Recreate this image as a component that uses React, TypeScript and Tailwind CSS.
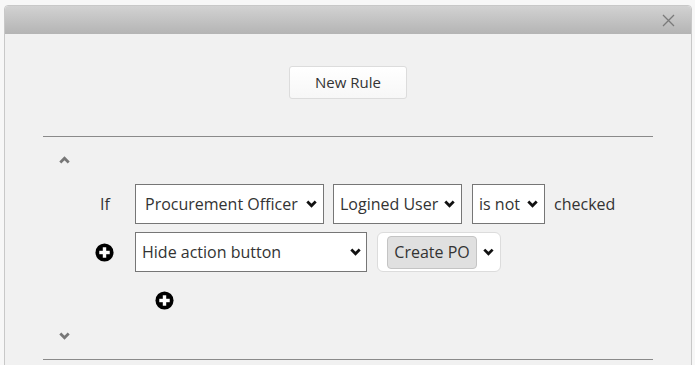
import React from "react";

const Chev = ({ className = "" }: { className?: string }) => (
  <svg width="11" height="8" viewBox="0 0 11 8" className={className}>
    <path d="M1.3 1.6 L5.5 5.8 L9.7 1.6" fill="none" stroke="currentColor" strokeWidth="2.8" />
  </svg>
);

const PlusCircle = () => (
  <svg width="19" height="19" viewBox="0 0 20 20">
    <circle cx="10" cy="10" r="9.5" fill="#000" />
    <rect x="8.2" y="4.5" width="3.6" height="11" fill="#fff" />
    <rect x="4.5" y="8.2" width="11" height="3.6" fill="#fff" />
  </svg>
);

const Select = ({ text, w, pl }: { text: string; w: string; pl: string }) => (
  <div
    className={`flex h-[40px] items-center justify-between border border-[#767676] bg-white pr-[6px] text-[16px] text-[#333] ${w} ${pl}`}
  >
    <span className="whitespace-nowrap">{text}</span>
    <Chev className="text-[#111]" />
  </div>
);

export default function App() {
  return (
    <div className="h-[365px] w-[695px] overflow-hidden bg-[#f7f7f7] pt-[5px] pl-[4px] pr-[3px]" style={{ fontFamily: '"Open Sans", sans-serif' }}>
      <div className="h-[400px] rounded-t-[4px] border border-[#c8c8c8] bg-[#f1f1f1]">
        <div className="flex h-[28px] items-center justify-end rounded-t-[4px] bg-gradient-to-b from-[#d2d2d2] to-[#b4b4b4] pr-[16px]">
          <svg width="13" height="13" viewBox="0 0 13 13">
            <path d="M1 1 L12 12 M12 1 L1 12" stroke="#7a7a7a" strokeWidth="1.3" />
          </svg>
        </div>
        <div className="flex justify-center pt-[32px]">
          <button className="h-[33px] w-[118px] rounded-[3px] border border-[#dcdcdc] bg-gradient-to-b from-white to-[#f7f7f7] text-[15px] text-[#333]">
            New Rule
          </button>
        </div>
        <div className="mx-[38px] mt-[37px] border-t border-[#8a8a8a]">
          <div className="pl-[16px] pt-[19px] text-[#777]">
            <Chev className="rotate-180" />
          </div>
          <div className="mt-[20px] flex items-center">
            <span className="w-[92px] pl-[57px] text-[16px] text-[#333]">If</span>
            <Select text="Procurement Officer" w="w-[189px]" pl="pl-[9px]" />
            <div className="w-[9px]" />
            <Select text="Logined User" w="w-[129px]" pl="pl-[6px]" />
            <div className="w-[10px]" />
            <Select text="is not" w="w-[73px]" pl="pl-[6px]" />
            <span className="ml-[9px] text-[16px] text-[#333]">checked</span>
          </div>
          <div className="mt-[8px] flex items-center">
            <div className="flex w-[92px] justify-start pl-[52px]">
              <PlusCircle />
            </div>
            <div className="flex h-[40px] w-[232px] items-center justify-between border border-[#767676] bg-white pl-[6px] pr-[5px] text-[16px] text-[#333]">
              <span>Hide action button</span>
              <Chev className="text-[#111]" />
            </div>
            <div className="ml-[10px] flex h-[40px] w-[124px] items-center rounded-[6px] border border-[#dcdcdc] bg-white pl-[9px] pr-[6px]">
              <div className="flex h-[33px] w-[91px] items-center justify-center rounded-[4px] border border-[#c4c4c4] bg-[#e0e0e0] text-[16px] text-[#333]">
                Create PO
              </div>
              <Chev className="ml-[6px] text-[#111]" />
            </div>
          </div>
          <div className="mt-[19px] pl-[112px]">
            <PlusCircle />
          </div>
          <div className="mt-[22px] pl-[16px] text-[#777]">
            <Chev />
          </div>
          <div className="mt-[19px] border-t border-[#8a8a8a]" />
        </div>
      </div>
    </div>
  );
}
